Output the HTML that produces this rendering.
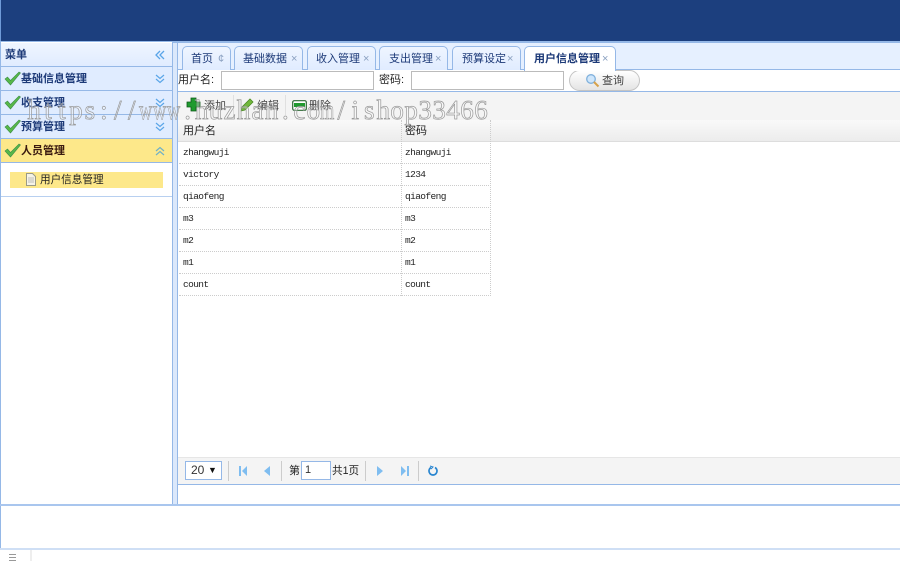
<!DOCTYPE html>
<html><head><meta charset="utf-8"><style>
html,body{margin:0;padding:0;background:#fff}
#p{position:relative;width:900px;height:561px;overflow:hidden;background:#fff;font:11px "Liberation Sans","Noto Sans CJK SC",sans-serif;color:#222}
#p div,#p svg{position:absolute}
.t{white-space:nowrap;line-height:14px}
.acc{left:1px;width:171px;height:23px;background:#e0ecff;border-bottom:1px solid #95b8e7}
.acct{left:20px;top:5px;font-weight:bold;color:#1d3a78;font-size:11px}
.tab{top:46px;height:23px;background:linear-gradient(#eff5ff,#e0ecff);border:1px solid #95b8e7;border-bottom:0;border-radius:5px 5px 0 0;box-sizing:content-box}
.tabt{top:5px;color:#1d3a78;font-size:11px}
.x{top:5px;color:#8aa0c0;font-size:11px}
.cell{font:9.5px "Liberation Mono","Noto Sans CJK SC",monospace;letter-spacing:-.6px;color:#222;margin-top:1px}
.hl{left:179px;width:312px;height:0;border-top:1px dotted #ccc}
.vl{width:0;border-left:1px dotted #ccc;top:120px;height:176px}
.sep{top:461px;width:1px;height:20px;background:#ccc}
.inp{top:71px;height:17px;background:#fff;border:1px solid #bbb}
#wm{left:27px;top:95px;font:27px/30px "Liberation Serif",serif;color:rgba(255,255,255,.3);-webkit-text-stroke:.7px #999;z-index:5;white-space:nowrap}
#wm span{display:inline-block;width:13.97px;text-align:center}
#wm span.w{text-align:left;transform:scaleX(.68);transform-origin:0 50%}
</style></head><body><div id="p">
<div style="left:0;top:0;width:900px;height:41px;background:#1c3f7e"></div>
<div style="left:0;top:0;width:1px;height:41px;background:#6f9bd8"></div>
<div style="left:0;top:41px;width:900px;height:2px;background:#95b8e7"></div>
<div style="left:0;top:43px;width:900px;height:462px;background:#dbe8fb"></div>

<!-- left panel -->
<div style="left:0;top:42px;width:173px;height:463px;background:#fff;border-right:1px solid #95b8e7;border-left:1px solid #95b8e7;box-sizing:border-box"></div>
<div style="left:1px;top:43px;width:171px;height:23px;background:linear-gradient(#eff5ff,#e0ecff);border-bottom:1px solid #95b8e7"></div>
<div class="t" style="left:5px;top:48px;font-weight:bold;color:#1d3a78">菜单</div>
<svg style="left:155px;top:50px" width="10" height="10" viewBox="0 0 10 10" fill="none" stroke="#5aa5e8" stroke-width="1.3"><path d="M5 1L1 5l4 4M9 1L5 5l4 4"/></svg>

<div class="acc" style="top:67px"><div class="t acct">基础信息管理</div></div>
<div class="acc" style="top:91px"><div class="t acct">收支管理</div></div>
<div class="acc" style="top:115px"><div class="t acct">预算管理</div></div>
<div class="acc" style="top:139px;background:#fde88a"><div class="t acct" style="color:#3a1a10">人员管理</div></div>

<svg style="left:4px;top:71px" width="17" height="15" viewBox="0 0 17 15"><path d="M1 8l2.5-2 3 3.5L15 1l1.5 1L6.5 14z" fill="#58b848" stroke="#3d8f4a" stroke-width=".6"/></svg>
<svg style="left:4px;top:95px" width="17" height="15" viewBox="0 0 17 15"><path d="M1 8l2.5-2 3 3.5L15 1l1.5 1L6.5 14z" fill="#58b848" stroke="#3d8f4a" stroke-width=".6"/></svg>
<svg style="left:4px;top:119px" width="17" height="15" viewBox="0 0 17 15"><path d="M1 8l2.5-2 3 3.5L15 1l1.5 1L6.5 14z" fill="#58b848" stroke="#3d8f4a" stroke-width=".6"/></svg>
<svg style="left:4px;top:143px" width="17" height="15" viewBox="0 0 17 15"><path d="M1 8l2.5-2 3 3.5L15 1l1.5 1L6.5 14z" fill="#58b848" stroke="#3d8f4a" stroke-width=".6"/></svg>

<svg style="left:155px;top:74px" width="10" height="10" viewBox="0 0 10 10" fill="none" stroke="#5aa5e8" stroke-width="1.2"><path d="M1 1l4 3.5L9 1M1 5l4 3.5L9 5"/></svg>
<svg style="left:155px;top:98px" width="10" height="10" viewBox="0 0 10 10" fill="none" stroke="#5aa5e8" stroke-width="1.2"><path d="M1 1l4 3.5L9 1M1 5l4 3.5L9 5"/></svg>
<svg style="left:155px;top:122px" width="10" height="10" viewBox="0 0 10 10" fill="none" stroke="#5aa5e8" stroke-width="1.2"><path d="M1 1l4 3.5L9 1M1 5l4 3.5L9 5"/></svg>
<svg style="left:155px;top:146px" width="10" height="10" viewBox="0 0 10 10" fill="none" stroke="#6fb0c8" stroke-width="1.2"><path d="M1 5l4-3.5L9 5M1 9l4-3.5L9 9"/></svg>

<div style="left:10px;top:172px;width:153px;height:16px;background:#fde88a"></div>
<svg style="left:26px;top:173px" width="10" height="13" viewBox="0 0 10 13"><path d="M.5.5h6l3 3v9H.5z" fill="#f6f3e6" stroke="#9a9a88"/><path d="M2 5h6M2 7h6M2 9h6" stroke="#aaa" stroke-width=".8"/></svg>
<div class="t" style="left:40px;top:173px;color:#222;font-size:10.6px">用户信息管理</div>
<div style="left:1px;top:196px;width:171px;height:1px;background:#b8d0f0"></div>

<!-- right panel -->
<div style="left:178px;top:43px;width:722px;height:26px;background:#e6f0ff"></div>
<div style="left:177px;top:43px;width:1px;height:462px;background:#95b8e7"></div>
<div style="left:178px;top:69px;width:722px;height:1px;background:#95b8e7"></div>

<div class="tab" style="left:182px;width:47px"><div class="t tabt" style="left:8px">首页</div><div class="t x" style="left:35px">¢</div></div>
<div class="tab" style="left:234px;width:67px"><div class="t tabt" style="left:8px">基础数据</div><div class="t x" style="left:56px">×</div></div>
<div class="tab" style="left:307px;width:67px"><div class="t tabt" style="left:8px">收入管理</div><div class="t x" style="left:55px">×</div></div>
<div class="tab" style="left:379px;width:67px"><div class="t tabt" style="left:9px">支出管理</div><div class="t x" style="left:55px">×</div></div>
<div class="tab" style="left:452px;width:67px"><div class="t tabt" style="left:9px">预算设定</div><div class="t x" style="left:54px">×</div></div>
<div class="tab" style="left:524px;width:90px;height:24px;background:#fff;z-index:2"><div class="t tabt" style="left:9px;font-weight:bold">用户信息管理</div><div class="t x" style="left:77px">×</div></div>

<div style="left:178px;top:70px;width:722px;height:21px;background:#fff"></div>
<div class="t" style="left:178px;top:73px;color:#222">用户名:</div>
<div class="inp" style="left:221px;width:151px"></div>
<div class="t" style="left:379px;top:73px;color:#222">密码:</div>
<div class="inp" style="left:411px;width:151px"></div>
<div style="left:569px;top:70px;width:69px;height:19px;border:1px solid #c4c4c4;border-radius:11px;background:linear-gradient(#fff,#e4e4e4)"></div>
<svg style="left:585px;top:73px" width="15" height="15" viewBox="0 0 15 15"><circle cx="6" cy="6" r="4.3" fill="#cfe6fb" stroke="#7fb0dc" stroke-width="1.3"/><path d="M9 9l4.5 4.5" stroke="#d6a24c" stroke-width="2"/></svg>
<div class="t" style="left:602px;top:74px;color:#444">查询</div>
<div style="left:178px;top:91px;width:722px;height:1px;background:#95b8e7"></div>

<!-- toolbar -->
<div style="left:178px;top:92px;width:722px;height:28px;background:#f4f4f4"></div>
<svg style="left:186px;top:97px" width="15" height="15" viewBox="0 0 15 15"><path d="M5 1h5v4h4v5h-4v4H5v-4H1V5h4z" fill="#1f9a2e" stroke="#0d5a18" stroke-width=".8"/></svg>
<div class="t" style="left:204px;top:99px;color:#444">添加</div>
<div style="left:233px;top:95px;width:1px;height:20px;background:#e0e0e0"></div>
<svg style="left:240px;top:98px" width="14" height="14" viewBox="0 0 14 14"><path d="M1 13l1-4 8-8 3 3-8 8z" fill="#72b83c" stroke="#4c8a26" stroke-width=".8"/></svg>
<div class="t" style="left:257px;top:99px;color:#444">编辑</div>
<div style="left:285px;top:95px;width:1px;height:20px;background:#e0e0e0"></div>
<svg style="left:292px;top:100px" width="15" height="11" viewBox="0 0 15 11"><rect x=".7" y=".7" width="13.6" height="9.6" rx="1.5" fill="#fff" stroke="#2c6a34" stroke-width="1.2"/><rect x="2" y="3" width="11" height="4" fill="#1f9a2e"/></svg>
<div class="t" style="left:309px;top:99px;color:#444">删除</div>

<!-- grid -->
<div style="left:178px;top:120px;width:722px;height:21px;background:linear-gradient(#f9f9f9,#ececec);border-bottom:1px solid #ddd"></div>
<div style="left:178px;top:142px;width:722px;height:315px;background:#fff"></div>
<div class="vl" style="left:401px"></div>
<div class="vl" style="left:490px"></div>
<div class="t" style="left:183px;top:124px;color:#222">用户名</div>
<div class="t" style="left:405px;top:124px;color:#222">密码</div>
<div class="hl" style="top:163px"></div><div class="hl" style="top:185px"></div><div class="hl" style="top:207px"></div><div class="hl" style="top:229px"></div><div class="hl" style="top:251px"></div><div class="hl" style="top:273px"></div><div class="hl" style="top:295px"></div>
<div class="t cell" style="left:183px;top:146px">zhangwuji</div><div class="t cell" style="left:405px;top:146px">zhangwuji</div>
<div class="t cell" style="left:183px;top:168px">victory</div><div class="t cell" style="left:405px;top:168px">1234</div>
<div class="t cell" style="left:183px;top:190px">qiaofeng</div><div class="t cell" style="left:405px;top:190px">qiaofeng</div>
<div class="t cell" style="left:183px;top:212px">m3</div><div class="t cell" style="left:405px;top:212px">m3</div>
<div class="t cell" style="left:183px;top:234px">m2</div><div class="t cell" style="left:405px;top:234px">m2</div>
<div class="t cell" style="left:183px;top:256px">m1</div><div class="t cell" style="left:405px;top:256px">m1</div>
<div class="t cell" style="left:183px;top:278px">count</div><div class="t cell" style="left:405px;top:278px">count</div>

<!-- pagination -->
<div style="left:178px;top:457px;width:722px;height:27px;background:#f4f4f4;border-top:1px solid #e6e6e6;box-sizing:border-box"></div>
<div style="left:178px;top:484px;width:722px;height:1px;background:#95b8e7"></div>
<div style="left:185px;top:461px;width:35px;height:17px;background:#fff;border:1px solid #95b8e7"></div>
<div class="t" style="left:191px;top:463px;font-size:12px;color:#333">20</div>
<div class="t" style="left:208px;top:463px;font-size:9px;color:#111">▼</div>
<div class="sep" style="left:228px"></div>
<svg style="left:239px;top:466px" width="9" height="10" viewBox="0 0 9 10" fill="#7fbdf0"><rect width="2" height="10"/><path d="M8 0v10L3 5z"/></svg>
<svg style="left:264px;top:466px" width="7" height="10" viewBox="0 0 7 10" fill="#7fbdf0"><path d="M6 0v10L0 5z"/></svg>
<div class="sep" style="left:281px"></div>
<div class="t" style="left:289px;top:464px;color:#222">第</div>
<div style="left:301px;top:461px;width:28px;height:17px;background:#fff;border:1px solid #95b8e7"></div>
<div class="t" style="left:305px;top:463px;color:#333">1</div>
<div class="t" style="left:332px;top:464px;color:#222;font-size:10.6px">共1页</div>
<div class="sep" style="left:365px"></div>
<svg style="left:377px;top:466px" width="7" height="10" viewBox="0 0 7 10" fill="#7fbdf0"><path d="M0 0v10l6-5z"/></svg>
<svg style="left:401px;top:466px" width="9" height="10" viewBox="0 0 9 10" fill="#7fbdf0"><path d="M0 0v10l5-5z"/><rect x="6" width="2" height="10"/></svg>
<div class="sep" style="left:418px"></div>
<svg style="left:428px;top:465px" width="11" height="11" viewBox="0 0 11 11" fill="none" stroke="#2a86d0" stroke-width="1.7"><path d="M3 2.5a4 4 0 1 0 4 0"/><path d="M2 1l3 1-2 2" stroke-width="1"/></svg>

<!-- bottom -->
<div style="left:178px;top:485px;width:722px;height:20px;background:#fff"></div>
<div style="left:0;top:504px;width:900px;height:2px;background:#a9c6ee"></div>
<div style="left:0;top:506px;width:900px;height:42px;background:#fff"></div>
<div style="left:0;top:506px;width:1px;height:43px;background:#95b8e7"></div>
<div style="left:0;top:548px;width:900px;height:2px;background:#cfdff5"></div>
<div style="left:30px;top:550px;width:2px;height:11px;background:#eee"></div>
<div style="left:9px;top:554px;width:7px;height:1px;background:#999"></div>
<div style="left:9px;top:557px;width:7px;height:1px;background:#999"></div>
<div style="left:9px;top:560px;width:7px;height:1px;background:#999"></div>

<!-- watermark -->
<div id="wm"><span>h</span><span>t</span><span>t</span><span>p</span><span>s</span><span>:</span><span>/</span><span>/</span><span class="w">w</span><span class="w">w</span><span class="w">w</span><span>.</span><span>h</span><span>u</span><span>z</span><span>h</span><span>a</span><span>n</span><span>.</span><span>c</span><span>o</span><span class="w">m</span><span>/</span><span>i</span><span>s</span><span>h</span><span>o</span><span>p</span><span>3</span><span>3</span><span>4</span><span>6</span><span>6</span></div>
</div></body></html>
